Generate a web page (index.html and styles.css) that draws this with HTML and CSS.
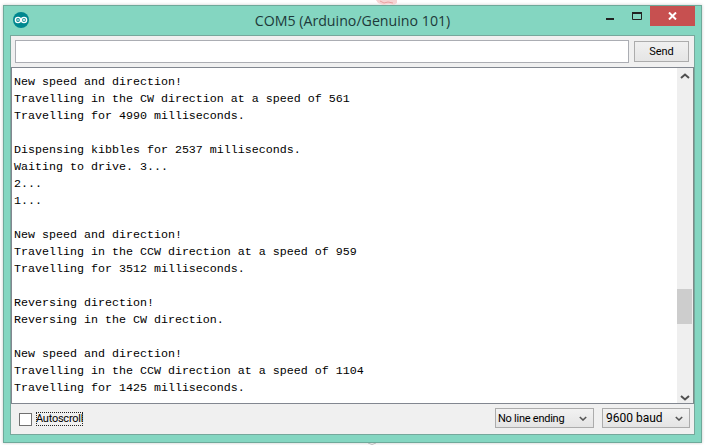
FILE: index.html
```html
<!DOCTYPE html>
<html lang="en">
<head>
<meta charset="utf-8">
<title>COM5 (Arduino/Genuino 101)</title>
<link rel="stylesheet" href="styles.css">
</head>
<body>
<svg class="bg-art" width="30" height="6" viewBox="0 0 30 6" aria-hidden="true"><path d="M4 0l2 3 5 2 6-1 5 1 3-2V0z" fill="#f6d3d3"/><path d="M8 1l4 2 4-1 5 1" stroke="#eaa0a0" fill="none"/></svg>
<div class="window">
  <header class="titlebar">
    <svg class="logo" width="16" height="16" viewBox="0 0 16 16" aria-hidden="true">
      <circle cx="8" cy="8" r="8" fill="#00878f"/>
      <g fill="none" stroke="#fff" stroke-width="1.4"><circle cx="5" cy="8" r="2.6"/><circle cx="11" cy="8" r="2.6"/></g>
      <path d="M3.8 8h2.4M9.8 8h2.4M11 6.8v2.4" stroke="#fff"/>
    </svg>
    <h1 class="title">COM5 (Arduino/Genuino 101)</h1>
    <div class="controls">
      <span class="ctl ctl-min"><svg width="8" height="2" viewBox="0 0 8 2"><rect width="8" height="2" fill="#222"/></svg></span>
      <span class="ctl ctl-max"><svg width="10" height="8" viewBox="0 0 10 8"><path d="M.5.5h9v7h-9z" fill="none" stroke="#222"/><rect width="10" height="2" fill="#222"/></svg></span>
      <span class="ctl ctl-close"><svg width="9" height="8" viewBox="0 0 9 8"><path d="M1 .5l7 7M8 .5l-7 7" stroke="#fff" stroke-width="2"/></svg></span>
    </div>
  </header>
  <main class="client">
    <div class="sendrow">
      <div class="input"></div>
      <button class="send">Send</button>
    </div>
    <div class="outputbox">
      <pre class="output">New speed and direction!
Travelling in the CW direction at a speed of 561
Travelling for 4990 milliseconds.

Dispensing kibbles for 2537 milliseconds.
Waiting to drive. 3...
2...
1...

New speed and direction!
Travelling in the CCW direction at a speed of 959
Travelling for 3512 milliseconds.

Reversing direction!
Reversing in the CW direction.

New speed and direction!
Travelling in the CCW direction at a speed of 1104
Travelling for 1425 milliseconds.</pre>
      <div class="scrollbar">
        <svg class="arrow" width="10" height="6" viewBox="0 0 10 6"><path d="M1 5l4-3.5L9 5" fill="none" stroke="#505050" stroke-width="2"/></svg>
        <div class="track"><div class="thumb"></div></div>
        <svg class="arrow" width="10" height="6" viewBox="0 0 10 6"><path d="M1 1l4 3.5L9 1" fill="none" stroke="#505050" stroke-width="2"/></svg>
      </div>
    </div>
    <footer class="bottombar">
      <span class="check"></span>
      <span class="autoscroll">Autoscroll</span>
      <div class="spacer"></div>
      <div class="select select-line"><span>No line ending</span><svg width="8" height="5" viewBox="0 0 8 5"><path d="M.8 1L4 4l3.2-3" fill="none" stroke="#555" stroke-width="1.6"/></svg></div>
      <div class="select select-baud"><span>9600 baud</span><svg width="8" height="5" viewBox="0 0 8 5"><path d="M.8 1L4 4l3.2-3" fill="none" stroke="#555" stroke-width="1.6"/></svg></div>
    </footer>
  </main>
</div>
<svg class="bg-art-bottom" width="10" height="2" viewBox="0 0 10 2" aria-hidden="true"><path d="M1 0q4 3 8 0" fill="none" stroke="#bbb"/></svg>
</body>
</html>
```
FILE: styles.css
```css
* { box-sizing: border-box; }
html, body { margin: 0; height: 100%; }
body {
  background: #fff;
  padding: 5px 0 0 3px;
  overflow: hidden;
  position: relative;
  font-family: "Roboto", "Noto Sans", sans-serif;
}
.bg-art { position: absolute; left: 372px; top: 0; }
.bg-art-bottom { position: absolute; left: 367px; top: 443px; }
.window {
  width: 699px;
  height: 438px;
  background: #84d6c1;
  border: 1px solid #6ea99a;
  box-shadow: 0 0 3px rgba(0,0,0,.22);
  padding: 0 6px 7px 6px;
  display: flex;
  flex-direction: column;
}
.titlebar {
  height: 29px;
  flex: none;
  display: flex;
  position: relative;
  justify-content: center;
}
.logo { position: absolute; left: 3px; top: 6px; }
.title {
  margin: 5px 0 0;
  font-family: "Open Sans", sans-serif;
  font-size: 14.2px;
  font-weight: 400;
  color: #1d3a3a;
  line-height: 20px;
}
.controls {
  position: absolute;
  right: 0;
  top: 0;
  display: flex;
}
.ctl { display: flex; align-items: flex-start; justify-content: center; height: 20px; }
.ctl-min { width: 8px; margin-right: 18px; padding-top: 12px; }
.ctl-max { width: 10px; margin-right: 8px; padding-top: 6px; }
.ctl-close { width: 45px; background: #c75050; align-items: center; }
.client {
  flex: 1;
  min-height: 0;
  background: #f0f0f0;
  border: 1px solid #76a89c;
  display: flex;
  flex-direction: column;
}
.sendrow {
  height: 32px;
  flex: none;
  display: flex;
  padding: 4px 5px 0 4px;
  gap: 5px;
}
.input {
  width: 614px;
  height: 23px;
  background: #fff;
  border: 1px solid #abadb3;
}
.send {
  width: 55px;
  height: 21px;
  margin-top: 1px;
  padding: 0 0 1px;
  background: linear-gradient(#f0f0f0, #e5e5e5);
  border: 1px solid #acacac;
  font: 400 11px "Roboto", sans-serif;
  color: #000;
}
.outputbox {
  height: 337px;
  flex: none;
  margin-top: -1px;
  background: #fff;
  border: 1px solid #828790;
  border-right-color: #7d8a88;
  display: flex;
  min-width: 0;
}
.output {
  flex: 1;
  margin: 0;
  padding: 6px 0 0 2px;
  font-family: "Liberation Mono", "Courier New", monospace;
  font-size: 11.67px;
  line-height: 17px;
  color: #000;
  overflow: hidden;
}
.scrollbar {
  width: 16px;
  flex: none;
  background: #efefef;
  display: flex;
  flex-direction: column;
  align-items: center;
  padding: 5px 0 2px;
}
.arrow { flex: none; }
.track { flex: 1; width: 100%; position: relative; }
.thumb {
  position: absolute;
  left: 0;
  right: 1px;
  top: 210px;
  height: 35px;
  background: #cdcdcd;
}
.bottombar {
  flex: 1;
  display: flex;
  align-items: center;
  padding: 0 4px 0 8px;
  font-size: 11px;
  letter-spacing: -.25px;
  color: #000;
}
.check {
  width: 13px;
  height: 13px;
  background: #fff;
  border: 1px solid #707070;
}
.autoscroll {
  margin-left: 4px;
  outline: 1px dotted #222;
  outline-offset: -1px;
  line-height: 14px;
  height: 14px;
  width: 47px;
  white-space: nowrap;
}
.spacer { flex: 1; }
.select {
  height: 20px;
  margin-bottom: 2px;
  background: linear-gradient(#f2f2f2, #e4e4e4);
  border: 1px solid #acacac;
  display: flex;
  align-items: center;
  justify-content: space-between;
  padding: 0 6px 0 2px;
  white-space: nowrap;
}
.select-line { width: 99px; margin-right: 8px; }
.select-baud { width: 88px; padding-left: 3px; font-size: 12px; letter-spacing: 0; }
```
